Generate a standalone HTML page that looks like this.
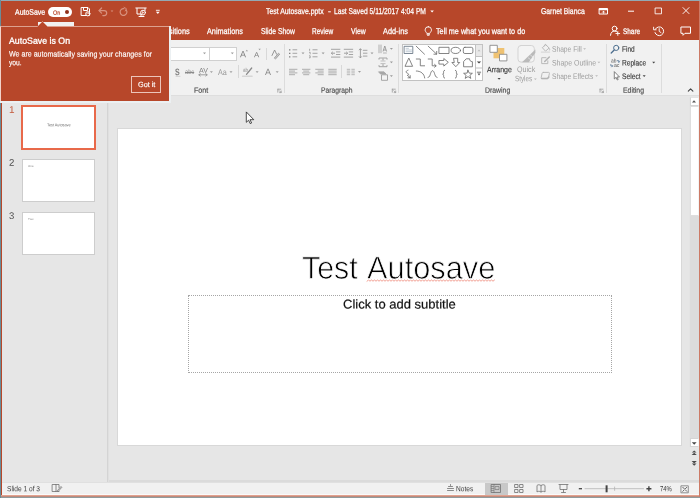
<!DOCTYPE html>
<html><head><meta charset="utf-8"><title>Test Autosave.pptx - PowerPoint</title>
<style>
html,body{margin:0;padding:0;}
body{width:700px;height:498px;position:relative;overflow:hidden;background:#e6e6e6;font-family:"Liberation Sans",sans-serif;}
.b{position:absolute;box-sizing:border-box;}
.t{position:absolute;white-space:nowrap;line-height:1;transform-origin:0 0;display:block;}
svg{position:absolute;left:0;top:0;}
</style></head><body>
<!-- window frame -->
<div class="b" style="left:0;top:0;width:700px;height:498px;background:#B7472A"></div>
<div class="b" style="left:0;top:0;width:700px;height:1px;background:#93a9b3"></div>
<div class="b" style="left:0;top:497px;width:700px;height:1px;background:#8f9c9e"></div>
<div class="b" style="left:0;top:0;width:1px;height:498px;background:#6a8c98"></div>
<div class="b" style="left:699px;top:1px;width:1px;height:496px;background:#cc7a66"></div>
<div class="b" style="left:1px;top:496px;width:698px;height:1px;background:#c08a7c"></div>
<!-- ribbon -->
<div class="b" style="left:2px;top:40px;width:697px;height:56px;background:#f1f1f1;border-bottom:1px solid #dedede"></div>
<!-- home tab -->
<div class="b" style="left:38px;top:22px;width:36px;height:18px;background:#f1f1f1"></div>
<!-- work area -->
<div class="b" style="left:2px;top:96px;width:697px;height:387px;background:#e6e6e6"></div>
<div class="b" style="left:107px;top:101px;width:1px;height:381px;background:#d4d4d4"></div>
<div class="b" style="left:108px;top:101px;width:1px;height:381px;background:#e0e0e0"></div>
<!-- thumbs -->
<div class="b" style="left:21px;top:105px;width:75px;height:45px;background:#fff;border:2px solid #E8694A"></div>
<div class="b" style="left:22px;top:159px;width:73px;height:43px;background:#fff;border:1px solid #cdcdcd"></div>
<div class="b" style="left:22px;top:212px;width:73px;height:43px;background:#fff;border:1px solid #cdcdcd"></div>
<!-- slide -->
<div class="b" style="left:117px;top:128px;width:565px;height:318px;background:#fff;border:1px solid #d8d8d8"></div>
<div class="b" style="left:188px;top:295px;width:424px;height:78px;border:1px dotted #a6a6a6"></div>
<!-- scrollbar -->
<div class="b" style="left:689px;top:97px;width:10px;height:350px;background:#dcdcdc;border-left:1px solid #e4e4e4"></div>
<div class="b" style="left:690px;top:97px;width:9px;height:9px;background:#fff;border:1px solid #d4d4d4;border-right-color:#f4f4f4;border-top-color:#e4e4e4"></div>
<div class="b" style="left:690px;top:106px;width:9px;height:110px;background:#fff;border:1px solid #dedede;border-right-color:#f4f4f4"></div>
<div class="b" style="left:690px;top:438px;width:9px;height:9px;background:#fff;border:1px solid #d4d4d4;border-right-color:#f4f4f4"></div>
<!-- status bar -->
<div class="b" style="left:109px;top:480px;width:590px;height:2px;background:#dbdbdb"></div>
<div class="b" style="left:2px;top:482px;width:697px;height:1px;background:#e0e0e0"></div>
<div class="b" style="left:2px;top:483px;width:697px;height:12px;background:#f1f1f1"></div>
<div class="b" style="left:2px;top:494px;width:697px;height:1px;background:#fafafa"></div>
<div class="b" style="left:1px;top:495px;width:698px;height:1px;background:#e2a28f"></div>
<div class="b" style="left:485px;top:483px;width:23px;height:12px;background:#c8c8c8"></div>
<!-- ribbon widgets -->
<div class="b" style="left:150px;top:47px;width:60px;height:14px;background:#fff;border:1px solid #d0d0d0"></div>
<div class="b" style="left:209px;top:47px;width:28px;height:14px;background:#fff;border:1px solid #d0d0d0"></div>
<div class="b" style="left:402px;top:44px;width:81px;height:37px;background:#fff;border:1px solid #c2c2c2"></div>
<div class="b" style="left:476px;top:45px;width:6px;height:12px;background:#e9e9e9"></div>
<!-- group separators -->
<div class="b" style="left:284px;top:44px;width:1px;height:49px;background:#dcdcdc"></div>
<div class="b" style="left:398px;top:44px;width:1px;height:49px;background:#dcdcdc"></div>
<div class="b" style="left:606px;top:44px;width:1px;height:49px;background:#dcdcdc"></div>
<div class="b" style="left:661px;top:44px;width:1px;height:49px;background:#dcdcdc"></div>
<div class="b" style="left:266px;top:48px;width:1px;height:12px;background:#d8d8d8"></div>
<div class="b" style="left:238px;top:65px;width:1px;height:13px;background:#d8d8d8"></div>
<div class="b" style="left:341px;top:65px;width:1px;height:13px;background:#d8d8d8"></div>
<!-- autosave toggle -->
<div class="b" style="left:48px;top:7px;width:24px;height:10px;background:#fff;border-radius:5px"></div>
<div class="b" style="left:65px;top:10px;width:4px;height:4px;background:#8f2f1a;border-radius:2px"></div>

<svg width="700" height="498" viewBox="0 0 700 498" fill="none" stroke-linecap="round" stroke-linejoin="round">
<!-- ===== title bar / QAT ===== -->
<g stroke="#fff" stroke-width="1">
 <!-- save -->
 <path d="M81.5 7.5h6.5l1.5 1.5v6.5h-8z"/>
 <path d="M83.5 7.5v3h4v-3" />
 <circle cx="87.8" cy="13.8" r="2.1" fill="#B7472A"/>
 <path d="M86.8 13.8a1 1 0 0 1 2 0" stroke-width="0.7"/>
 <!-- presentation -->
 <path d="M135.8 8h10.4"/>
 <path d="M137 8.5v5.5h3.5M145 8.5v2"/>
 <circle cx="143" cy="12.6" r="2.4"/>
 <path d="M142.4 11.6l1.5 1-1.5 1z" fill="#fff" stroke-width="0.4"/>
 <path d="M139 16.5h5M141 14.2v2"/>
 <!-- customize QAT -->
 <path d="M156.300 10.300h3" stroke-width="0.9"/>
 <path d="M155.900 11.800h3.800l-1.900 2.100z" fill="#fff" stroke="none"/>
 <!-- title dropdown -->
 <path d="M430.3 10.6h3.6l-1.8 2z" fill="#fff" stroke="none"/>
 <!-- ribbon display options -->
 <rect x="599.5" y="8.5" width="8" height="5.5"/>
 <path d="M599.5 9.5h8" stroke-width="1.4"/>
 <path d="M602.3 12.4l1.2-1.3 1.2 1.3M603.5 11.3v2" stroke-width="0.8"/>
 <!-- minimize -->
 <path d="M628 11.2h6" stroke-linecap="butt"/>
 <!-- maximize -->
 <rect x="655.500" y="8" width="6" height="5.800" stroke-width="0.85"/>
 <!-- close -->
 <path d="M683 7.6l6 6M689 7.6l-6 6" stroke-width="0.9"/>
 <!-- share person -->
 <circle cx="614.6" cy="28.6" r="2.4"/>
 <path d="M610.5 35.3c0.2-3 2-4.2 4.1-4.2c1.2 0 2.1 0.4 2.8 1"/>
 <path d="M617.8 31.6v3.8M615.9 33.5h3.8" stroke-width="0.9"/>
 <!-- history -->
 <path d="M655.3 29.2a4.4 4.4 0 1 1 -0.3 3.4"/>
 <path d="M653.6 27.2v2.6h2.6" stroke-width="0.9"/>
 <path d="M659.2 28.6v2.8l1.8 1.2" stroke-width="0.9"/>
 <!-- comment -->
 <path d="M681.300 27h9.200v6.300h-5.500l-2 2v-2h-1.700z"/>
 <!-- bulb -->
 <path d="M428.300 26.700a3.200 3.200 0 0 1 3.200 3.200c0 1.400-1.100 2.100-1.700 3.500h-3c-0.600-1.400-1.700-2.100-1.700-3.500a3.200 3.200 0 0 1 3.200-3.200z" stroke-width="0.9"/>
 <path d="M427 34.400h2.600M427.500 35.400h1.600" stroke-width="0.8"/>
</g>
<!-- faded undo / redo -->
<g stroke="#d8927f" stroke-width="1.2">
 <path d="M101.600 8l-2.600 2.600 2.600 2.600"/>
 <path d="M99.200 10.600h5a2.500 2.500 0 0 1 0 5h-1.400"/>
 <path d="M110.600 10.400h2.800l-1.400 1.600z" fill="#d8927f" stroke="none"/>
 <path d="M126.300 10a3.400 3.400 0 1 1 -2.400 -1.400"/>
 <path d="M124 7.300l2.400 1.400-1.200 2.300" stroke-width="0.9"/>
</g>

<!-- ===== Font group ===== -->
<g fill="#9c9c9c" stroke="none">
 <path d="M203 52.600h3l-1.500 1.700z"/>
 <path d="M230.800 52.600h3l-1.500 1.700z"/>
 <path d="M245.600 51.200h2.400l-1.200-1.500z"/>
 <path d="M258.400 48.800h2.400l-1.200 1.500z"/>
</g>
<g fill="#a0a0a0" stroke="none">
 <path d="M209.900 71.300h3l-1.500 1.700z"/>
 <path d="M229.500 71.300h3l-1.500 1.700z"/>
 <path d="M255.600 71.300h3l-1.500 1.700z"/>
 <path d="M275.700 71.300h3l-1.500 1.700z"/>
</g>
<g stroke="#8a8a8a" stroke-width="0.9">
 <!-- AV arrows -->
 <path d="M199 74.800h8M200.300 73.600l-1.500 1.200 1.500 1.200M205.700 73.600l1.500 1.200-1.500 1.200" stroke-width="0.8"/>
 <!-- clear formatting -->
 <path d="M272 55.500l2.600-5.500 2 4.200" />
 <path d="M274.500 57.800l4-4.600 1.200 1-4 4.600z" fill="#c8c8c8" stroke-width="0.7"/>
 <!-- highlighter pen -->
 <path d="M246.500 74.300l5.200-6.300" stroke-width="1.300"/>
 <path d="M242.600 76.300h9.400" stroke="#d6d6d6" stroke-width="1.600"/>
 <!-- font color bar -->
 <!-- S shadow -->
 <path d="M176 76.300h4" stroke="#cfcfcf" stroke-width="1"/>
</g>
<!-- dialog launchers -->
<g stroke="#9a9a9a" stroke-width="0.8">
 <path d="M278 89.200h-0.200v3M277.800 89.200h3"/>
 <path d="M279.300 90.700l1.700 1.700M281.200 91v1.600h-1.600"/>
 <path d="M392.300 89.200v3M392.300 89.200h3"/>
 <path d="M393.800 90.700l1.700 1.700M395.700 91v1.600h-1.600"/>
 <path d="M600 89.200v3M600 89.200h3"/>
 <path d="M601.500 90.700l1.700 1.700M603.400 91v1.600h-1.600"/>
</g>

<!-- ===== Paragraph group ===== -->
<g stroke="#9c9c9c" stroke-width="0.9" stroke-linecap="butt">
 <!-- bullets -->
 <path d="M292.500 49.800h4.700M292.500 53.300h4.700M292.500 56.800h4.700"/>
 <path d="M289 49.800h1.400M289 53.300h1.400M289 56.800h1.400" stroke="#808080" stroke-width="1.300"/>
 <!-- numbering -->
 <path d="M312.500 49.800h5M312.500 53.300h5M312.500 56.800h5"/>
 <path d="M309.600 48.800v2M309 52.300h1.200v2M309 55.800h1.200v2h-1.200" stroke="#8c8c8c" stroke-width="0.7"/>
 <!-- decrease indent -->
 <path d="M331 49.300h9.300M336 51.900h4.300M336 54.500h4.300M331 57.100h9.300"/>
 <path d="M335 53.200h-3.600M332.800 51.800l-1.500 1.400 1.500 1.400" stroke="#8c8c8c" stroke-width="0.8"/>
 <!-- increase indent -->
 <path d="M343.800 49.300h9.300M348.800 51.900h4.300M348.800 54.500h4.300M343.800 57.100h9.300"/>
 <path d="M344 53.200h3.600M346.200 51.800l1.500 1.400-1.500 1.400" stroke="#8c8c8c" stroke-width="0.8"/>
 <!-- line spacing -->
 <path d="M363 50.300h4.400M363 53.200h4.400M363 56.100h4.400"/>
 <path d="M360.400 48.800v9M359 50.200l1.400-1.500 1.400 1.500M359 56.400l1.400 1.500 1.400-1.500" stroke="#8c8c8c" stroke-width="0.8"/>
 <!-- text direction -->
 <path d="M379 44.600v8.600M381 44.600v8.600" stroke="#a8a8a8"/>
 <path d="M383 51.500l1.800-5.500 1.800 5.500M383.600 50h2.400" stroke="#8c8c8c" stroke-width="0.8"/>
 <path d="M383 53h3.800" stroke-width="0.7"/>
 <!-- align text -->
 <path d="M379 58h8M379 66.700h8M379 58v1.600M387 58v1.600M379 66.700v-1.600M387 66.700v-1.600"/>
 <path d="M380.500 61h5M380.500 63.600h5" stroke="#aaa" stroke-width="0.7"/>
 <path d="M383 58.500v1.800M383 66v-1.800" stroke="#8c8c8c" stroke-width="0.8"/>
 <!-- smartart -->
 <path d="M378.500 71.800h5.500l2 2.300h-5.500z" fill="#ababab" stroke-width="0.6"/>
 <rect x="381.500" y="74.800" width="6" height="5.500" fill="#f4f4f4"/>
 <!-- align row -->
 <path d="M289 69.300h8.400M289 71.100h6M289 72.900h8.400M289 74.700h6" stroke="#a6a6a6"/>
 <path d="M302 69.300h8.400M303.200 71.100h6M302 72.900h8.400M303.200 74.700h6" stroke="#a6a6a6"/>
 <path d="M315.300 69.300h8.400M317.700 71.100h6M315.300 72.900h8.400M317.700 74.700h6" stroke="#a6a6a6"/>
 <path d="M328.300 69.300h8.400M328.300 71.100h8.400M328.300 72.900h8.400M328.300 74.700h8.400" stroke="#a6a6a6"/>
 <!-- columns -->
 <path d="M346.800 69.300h3.400M346.800 71.100h3.400M346.800 72.900h3.400M346.800 74.700h3.400M351.400 69.300h3.400M351.400 71.100h3.400M351.400 72.900h3.400M351.400 74.700h3.400" stroke="#b0b0b0"/>
</g>
<g fill="#9a9a9a" stroke="none">
 <path d="M301.500 52.600h3l-1.500 1.700z"/>
 <path d="M321.600 52.600h3l-1.500 1.700z"/>
 <path d="M370.500 52.600h3l-1.500 1.700z"/>
 <path d="M389.900 48.100h3l-1.500 1.700z"/>
 <path d="M389.900 61.600h3l-1.500 1.700z"/>
 <path d="M389.900 75.200h3l-1.500 1.700z"/>
 <path d="M358 71h3l-1.500 1.700z"/>
</g>

<!-- ===== Drawing group ===== -->
<g stroke="#666" stroke-width="0.8">
 <!-- row1 -->
 <rect x="404.500" y="46.300" width="8.300" height="7.200" stroke="#5a6a7a"/>
 <path d="M406 48.300h2.500M406 50h5.500M406 51.700h5.500" stroke="#9ab" stroke-width="0.6"/>
 <path d="M416.200 46.200l8.300 8"/>
 <path d="M428.200 46.200l8.500 8M436.700 51.400v2.800h-2.800"/>
 <rect x="439.300" y="47.300" width="9.700" height="6.200"/>
 <ellipse cx="455.800" cy="50.400" rx="4.700" ry="3.100"/>
 <rect x="463.300" y="47.300" width="9.600" height="6.200" rx="1.600"/>
 <!-- row2 -->
 <path d="M409 58.400l3.600 7.900h-7.200z"/>
 <path d="M416.300 59h4v6.800h4.300"/>
 <path d="M428.200 59h4v6.800h3.600M434.600 64.400l1.600 1.400-1.600 1.400"/>
 <path d="M439.300 60.500h4.500v-2l4.500 3.800-4.500 3.800v-2h-4.500z"/>
 <path d="M453.900 58.300h3.800v4.200h2l-3.900 4.200-3.900-4.200h2z"/>
 <path d="M463.6 66.4v-4.800l2.600-2.800h3.400c-0.100 1.600 0.700 2.700 2.800 2.900v4.700z"/>
 <!-- row3 -->
 <path d="M408 70.200c-2 0.600-2.600 2-1 2.800s2.600 1.200 0.600 2.400M407.600 75.400l2.600 2.400M410.200 75.600v2.200h-2.200"/>
 <path d="M416.300 71c4.400 0 8 2.600 8.400 7"/>
 <path d="M428 77.5c1.7-0.2 2-2.3 2.6-4.1s1.1-2.7 1.9-2.7s1.4 0.9 2 2.700s1 3.900 2.600 4.100"/>
 <path d="M444.600 70.300c-1.400 0.200-1 1.600-1 2.600s-0.400 1.200-1 1.300c0.600 0.100 1 0.300 1 1.300s-0.400 2.400 1 2.600"/>
 <path d="M455.400 70.300c1.400 0.200 1 1.600 1 2.600s0.400 1.200 1 1.300c-0.600 0.100-1 0.300-1 1.300s0.400 2.400-1 2.600"/>
 <path d="M468 70.200l1.200 2.900 3.200 0.200-2.500 2 0.900 3.100-2.800-1.800-2.800 1.800 0.900-3.100-2.500-2 3.200-0.200z"/>
</g>
<!-- gallery scroll buttons -->
<g stroke="#c2c2c2" stroke-width="1" stroke-linecap="butt">
 <path d="M475.500 45v35.500M475.500 56.500h7M475.500 68h7"/>
</g>
<path d="M477.500 51.300h3l-1.500-1.700z" fill="#bdbdbd"/>
<path d="M476.800 61.500h4.400l-2.200 2.100z" fill="#444"/>
<path d="M477.500 73.600h3l-1.500 1.800z" fill="#555"/>
<path d="M477.300 72.200h3.400" stroke="#555" stroke-width="0.8"/>
<!-- arrange -->
<rect x="493.500" y="48" width="10.800" height="10.300" fill="#efc272"/>
<rect x="490.300" y="45.300" width="7" height="7" fill="#fff" stroke="#8a8a8a" stroke-width="0.9"/>
<rect x="499.900" y="54.300" width="7" height="6.600" fill="#fff" stroke="#8a8a8a" stroke-width="0.9"/>
<path d="M497.500 78h3.200l-1.600 1.800z" fill="#444"/>
<!-- quick styles -->
<rect x="518" y="45.500" width="16.300" height="16.600" rx="3" stroke="#d3d3d3" stroke-width="1" fill="#f4f4f4"/>
<path d="M535.400 49.400L535.400 52.800L528.800 62.200L522 62.200Z" fill="#bababa"/>
<path d="M530.600 55.200l2.200 1.600M528.400 58l2.200 1.600" stroke="#e4e4e4" stroke-width="0.800"/>
<path d="M534 78.400h2.800l-1.400 1.600z" fill="#b8b8b8"/>
<!-- shape fill/outline/effects icons -->
<g stroke="#b4b4b4" stroke-width="0.9">
 <path d="M542.600 47.400l3.200-2.800 3.300 3.500-3.300 2.800z"/>
 <path d="M544.400 45.800c-0.400-1.800 2.200-2 2-0.200"/>
 <path d="M549.300 48.400c0.600 0.800 0.600 1.600 0 2" stroke-width="0.8"/>
 <path d="M541.400 52.100h8.200" stroke="#d9d9d9" stroke-width="1.300"/>
 <path d="M546 57.700h-4.300v5.900h6.100v-2.800"/>
 <path d="M544.700 61.500l4.600-4.500" stroke-width="1.500"/>
 <path d="M543.300 72.400h5.300q1 0 0.800 1l-0.900 4.200q-0.200 1-1.200 1h-5.300q-1 0-0.800-1l0.900-4.200q0.200-1 1.200-1z"/>
 <path d="M541.600 78.500h5.800l1.400-1.400" stroke-width="1.500"/>
</g>
<g fill="#b8b8b8">
 <path d="M583.200 48.200h2.800l-1.400 1.600z"/>
 <path d="M597.500 61.700h2.800l-1.400 1.600z"/>
 <path d="M595.200 75.200h2.800l-1.400 1.600z"/>
</g>
<!-- ===== Editing ===== -->
<g stroke="#4e6f8f" stroke-width="1">
 <circle cx="616.200" cy="47.900" r="2.600"/>
 <path d="M614.200 50l-3 3" stroke-width="1.300"/>
</g>
<g stroke="#666" stroke-width="0.8">
 <path d="M614.300 72v7l1.700-1.600 1.300 2.600 0.900-0.500-1.300-2.500h2.200z" fill="#fff"/>
</g>
<g stroke="#5a7a9a" stroke-width="0.7"><path d="M617.300 60.600h1.600v1.600M610.800 64.400v1.600h1.800M618.900 62.200l-1-1M618.900 62.200l1-1M612.600 66l-0.900-0.900M612.600 66l-0.900 0.900"/></g>
<path d="M652.200 61.700h3l-1.500 1.700z" fill="#444"/>
<path d="M642.700 75.200h3l-1.500 1.700z" fill="#444"/>
<!-- collapse ribbon -->
<path d="M688.300 91.200l2.300-2.400 2.300 2.400" stroke="#444" stroke-width="1.100"/>

<!-- ===== scrollbar arrows ===== -->
<path d="M692 102.400h4l-2-2.200z" fill="#555"/>
<path d="M691.800 442.200h4.800l-2.400 2.600z" fill="#444"/>
<g fill="#4a4a4a" stroke="none">
 <path d="M694.200 450.400l2.300 2.200h-4.600z"/><path d="M694.200 452.700l2.600 2.400h-5.200z"/>
 <path d="M694.200 465.800l2.300-2.200h-4.600z"/><path d="M694.200 463.400l2.600-2.400h-5.200z"/>
</g>

<!-- ===== status bar ===== -->
<g stroke="#707070" stroke-width="0.8">
 <!-- spellcheck book -->
 <path d="M52.500 484.500h3.500v7h-3.500zM56 484.500h3v3M56 491.500h3"/>
 <path d="M57.500 490.500l3.500-4 0.800 0.800-3.500 4z" />
 <!-- notes -->
 <path d="M447.500 488.500h6M447.500 490.500h6M448.500 486.500h4M450.500 484.500v1" />
 <!-- normal view -->
 <rect x="491.500" y="484.500" width="9" height="8" />
 <path d="M494 484.500v8M491.500 486.500h2M491.500 488.500h2M491.500 490.500h2" stroke-width="0.6"/>
 <rect x="495.500" y="486.500" width="3.500" height="3" stroke-width="0.6"/>
 <!-- sorter -->
 <rect x="515" y="484.500" width="3" height="3"/><rect x="520" y="484.500" width="3" height="3"/>
 <rect x="515" y="489.500" width="3" height="3"/><rect x="520" y="489.500" width="3" height="3"/>
 <!-- reading -->
 <path d="M541 485.500c-1.500-1-3-1-4 0v6.500c1-1 2.500-1 4 0c1.500-1 3-1 4 0v-6.500c-1-1-2.500-1-4 0v6.500"/>
 <!-- slideshow -->
 <path d="M559 484.500h9M560 485v4.500h7v-4.500M563.500 489.500v2.500M561.500 492.500h4"/>
 <!-- zoom -->
 <path d="M578.800 488.700h3.200" stroke="#444" stroke-width="1.300" stroke-linecap="butt"/>
 <path d="M585 488.700h58.500" stroke="#b2b2b2" stroke-width="0.800"/>
 <path d="M614.600 487v3.400" stroke="#b2b2b2" stroke-width="0.800"/>
 <path d="M606.600 485.300v7" stroke="#444" stroke-width="2" stroke-linecap="butt"/>
 <path d="M646.400 488.800h5M648.900 486.300v5" stroke="#444" stroke-width="1.400" stroke-linecap="butt"/>
 <!-- fit -->
 <rect x="681.300" y="485.800" width="7" height="7" stroke="#777"/>
 <path d="M682.800 487.300l1.400 1.400M686.800 487.300l-1.400 1.400M682.800 491.300l1.400-1.400M686.800 491.300l-1.400-1.400" stroke="#555" stroke-width="0.900"/>
</g>

<!-- ===== squiggle ===== -->
<path d="M367 281.2 l1.5 -1.2 l1.5 1.2 l1.5 -1.2 l1.5 1.2 l1.5 -1.2 l1.5 1.2 l1.5 -1.2 l1.5 1.2 l1.5 -1.2 l1.5 1.2 l1.5 -1.2 l1.5 1.2 l1.5 -1.2 l1.5 1.2 l1.5 -1.2 l1.5 1.2 l1.5 -1.2 l1.5 1.2 l1.5 -1.2 l1.5 1.2 l1.5 -1.2 l1.5 1.2 l1.5 -1.2 l1.5 1.2 l1.5 -1.2 l1.5 1.2 l1.5 -1.2 l1.5 1.2 l1.5 -1.2 l1.5 1.2 l1.5 -1.2 l1.5 1.2 l1.5 -1.2 l1.5 1.2 l1.5 -1.2 l1.5 1.2 l1.5 -1.2 l1.5 1.2 l1.5 -1.2 l1.5 1.2 l1.5 -1.2 l1.5 1.2 l1.5 -1.2 l1.5 1.2 l1.5 -1.2 l1.5 1.2 l1.5 -1.2 l1.5 1.2 l1.5 -1.2 l1.5 1.2 l1.5 -1.2 l1.5 1.2 l1.5 -1.2 l1.5 1.2 l1.5 -1.2 l1.5 1.2 l1.5 -1.2 l1.5 1.2 l1.5 -1.2 l1.5 1.2 l1.5 -1.2 l1.5 1.2 l1.5 -1.2 l1.5 1.2 l1.5 -1.2 l1.5 1.2 l1.5 -1.2 l1.5 1.2 l1.5 -1.2 l1.5 1.2 l1.5 -1.2 l1.5 1.2 l1.5 -1.2 l1.5 1.2 l1.5 -1.2 l1.5 1.2 l1.5 -1.2 l1.5 1.2 l1.5 -1.2 l1.5 1.2 l1.5 -1.2 l1.5 1.2 l1.5 -1.2 l1.5 1.2 l1.5 -1.2" stroke="#e8604a" stroke-width="0.6" stroke-linejoin="miter"/>
<!-- ===== mouse cursor ===== -->
<path d="M246.300 112.300L246.300 122.300L248.600 120.200L250.200 123.600L251.600 123L250 119.700L253.400 119.700Z" fill="#fff" stroke="#222" stroke-width="0.8" stroke-linejoin="miter"/>

</svg>
<div class="b" style="left:0;top:0;width:700px;height:498px;will-change:transform">
<span class="t" style="left:14.8px;top:8px;font-size:8px;color:#ffffff;font-weight:400;font-family:'Liberation Sans', sans-serif;transform:translateY(0.70px) rotate(0.05deg) scaleX(0.8701);-webkit-text-stroke:0.25px #fff;">AutoSave</span>
<span class="t" style="left:52.7px;top:9px;font-size:6px;color:#B7472A;font-weight:400;font-family:'Liberation Sans', sans-serif;transform:translateY(0.70px) rotate(0.05deg) scaleX(0.9101);-webkit-text-stroke:0.2px #B7472A;">On</span>
<span class="t" style="left:266.3px;top:6px;font-size:8.5px;color:#ffffff;font-weight:400;font-family:'Liberation Sans', sans-serif;transform:translateY(0.90px) rotate(0.05deg) scaleX(0.8085);-webkit-text-stroke:0.25px #fff;">Test Autosave.pptx</span>
<span class="t" style="left:328px;top:6px;font-size:8.5px;color:#ffffff;font-weight:400;font-family:'Liberation Sans', sans-serif;transform:translateY(0.90px) rotate(0.05deg) scaleX(1.0522);-webkit-text-stroke:0.25px #fff;">-</span>
<span class="t" style="left:334px;top:6px;font-size:8.5px;color:#ffffff;font-weight:400;font-family:'Liberation Sans', sans-serif;transform:translateY(0.90px) rotate(0.05deg) scaleX(0.7924);-webkit-text-stroke:0.25px #fff;">Last Saved 5/11/2017 4:04 PM</span>
<span class="t" style="left:540.6px;top:6px;font-size:8.5px;color:#ffffff;font-weight:400;font-family:'Liberation Sans', sans-serif;transform:translateY(0.90px) rotate(0.05deg) scaleX(0.8040);-webkit-text-stroke:0.25px #fff;">Garnet Bianca</span>
<span class="t" style="left:10px;top:26px;font-size:8.5px;color:#ffffff;font-weight:400;font-family:'Liberation Sans', sans-serif;transform:translateY(0.90px) rotate(0.05deg) scaleX(0.8752);-webkit-text-stroke:0.25px #fff;">File</span>
<span class="t" style="left:46px;top:27px;font-size:8px;color:#B7472A;font-weight:400;font-family:'Liberation Sans', sans-serif;transform:translateY(0.60px) rotate(0.05deg) scaleX(0.8431);">Home</span>
<span class="t" style="left:82px;top:26px;font-size:8.5px;color:#ffffff;font-weight:400;font-family:'Liberation Sans', sans-serif;transform:translateY(0.90px) rotate(0.05deg) scaleX(0.8461);-webkit-text-stroke:0.25px #fff;">Insert</span>
<span class="t" style="left:116px;top:26px;font-size:8.5px;color:#ffffff;font-weight:400;font-family:'Liberation Sans', sans-serif;transform:translateY(0.90px) rotate(0.05deg) scaleX(0.7932);-webkit-text-stroke:0.25px #fff;">Design</span>
<span class="t" style="left:153.5px;top:26px;font-size:8.5px;color:#ffffff;font-weight:400;font-family:'Liberation Sans', sans-serif;transform:translateY(0.90px) rotate(0.05deg) scaleX(0.8650);-webkit-text-stroke:0.25px #fff;">Transitions</span>
<span class="t" style="left:207px;top:26px;font-size:8.5px;color:#ffffff;font-weight:400;font-family:'Liberation Sans', sans-serif;transform:translateY(0.90px) rotate(0.05deg) scaleX(0.8557);-webkit-text-stroke:0.25px #fff;">Animations</span>
<span class="t" style="left:260.5px;top:26px;font-size:8.5px;color:#ffffff;font-weight:400;font-family:'Liberation Sans', sans-serif;transform:translateY(0.90px) rotate(0.05deg) scaleX(0.7946);-webkit-text-stroke:0.25px #fff;">Slide Show</span>
<span class="t" style="left:311.8px;top:26px;font-size:8.5px;color:#ffffff;font-weight:400;font-family:'Liberation Sans', sans-serif;transform:translateY(0.90px) rotate(0.05deg) scaleX(0.7603);-webkit-text-stroke:0.25px #fff;">Review</span>
<span class="t" style="left:351px;top:26px;font-size:8.5px;color:#ffffff;font-weight:400;font-family:'Liberation Sans', sans-serif;transform:translateY(0.90px) rotate(0.05deg) scaleX(0.8038);-webkit-text-stroke:0.25px #fff;">View</span>
<span class="t" style="left:383.2px;top:26px;font-size:8.5px;color:#ffffff;font-weight:400;font-family:'Liberation Sans', sans-serif;transform:translateY(0.90px) rotate(0.05deg) scaleX(0.8635);-webkit-text-stroke:0.25px #fff;">Add-ins</span>
<span class="t" style="left:435.6px;top:26px;font-size:8.5px;color:#ffffff;font-weight:400;font-family:'Liberation Sans', sans-serif;transform:translateY(0.90px) rotate(0.05deg) scaleX(0.8504);-webkit-text-stroke:0.25px #fff;">Tell me what you want to do</span>
<span class="t" style="left:623.4px;top:27px;font-size:8px;color:#ffffff;font-weight:400;font-family:'Liberation Sans', sans-serif;transform:translateY(0.90px) rotate(0.05deg) scaleX(0.8003);-webkit-text-stroke:0.25px #fff;">Share</span>
<span class="t" style="left:194px;top:86px;font-size:7.7px;color:#4a4a4a;font-weight:400;font-family:'Liberation Sans', sans-serif;transform:translateY(0.70px) rotate(0.05deg) scaleX(0.9287);-webkit-text-stroke:0.15px #4a4a4a;">Font</span>
<span class="t" style="left:320.7px;top:86px;font-size:7.7px;color:#4a4a4a;font-weight:400;font-family:'Liberation Sans', sans-serif;transform:translateY(0.70px) rotate(0.05deg) scaleX(0.8771);-webkit-text-stroke:0.15px #4a4a4a;">Paragraph</span>
<span class="t" style="left:485px;top:86px;font-size:7.7px;color:#4a4a4a;font-weight:400;font-family:'Liberation Sans', sans-serif;transform:translateY(0.70px) rotate(0.05deg) scaleX(0.8969);-webkit-text-stroke:0.15px #4a4a4a;">Drawing</span>
<span class="t" style="left:623px;top:86px;font-size:7.7px;color:#4a4a4a;font-weight:400;font-family:'Liberation Sans', sans-serif;transform:translateY(0.70px) rotate(0.05deg) scaleX(0.8928);-webkit-text-stroke:0.15px #4a4a4a;">Editing</span>
<span class="t" style="left:486.6px;top:66px;font-size:8px;color:#3a3a3a;font-weight:400;font-family:'Liberation Sans', sans-serif;transform:translateY(0.20px) rotate(0.05deg) scaleX(0.8744);-webkit-text-stroke:0.15px #3a3a3a;">Arrange</span>
<span class="t" style="left:517px;top:65px;font-size:8px;color:#9e9e9e;font-weight:400;font-family:'Liberation Sans', sans-serif;transform:translateY(0.90px) rotate(0.05deg) scaleX(0.8895);">Quick</span>
<span class="t" style="left:515px;top:75px;font-size:8px;color:#9e9e9e;font-weight:400;font-family:'Liberation Sans', sans-serif;transform:translateY(0.20px) rotate(0.05deg) scaleX(0.7889);">Styles</span>
<span class="t" style="left:552px;top:45px;font-size:8px;color:#9e9e9e;font-weight:400;font-family:'Liberation Sans', sans-serif;transform:translateY(0.70px) rotate(0.05deg) scaleX(0.8346);">Shape Fill</span>
<span class="t" style="left:552px;top:59px;font-size:8px;color:#9e9e9e;font-weight:400;font-family:'Liberation Sans', sans-serif;transform:translateY(0.40px) rotate(0.05deg) scaleX(0.8677);">Shape Outline</span>
<span class="t" style="left:552px;top:72px;font-size:8px;color:#9e9e9e;font-weight:400;font-family:'Liberation Sans', sans-serif;transform:translateY(0.90px) rotate(0.05deg) scaleX(0.8313);">Shape Effects</span>
<span class="t" style="left:622.3px;top:45px;font-size:8px;color:#3a3a3a;font-weight:400;font-family:'Liberation Sans', sans-serif;transform:translateY(0.70px) rotate(0.05deg) scaleX(0.8157);-webkit-text-stroke:0.15px #3a3a3a;">Find</span>
<span class="t" style="left:622.3px;top:59px;font-size:8px;color:#3a3a3a;font-weight:400;font-family:'Liberation Sans', sans-serif;transform:translateY(0.40px) rotate(0.05deg) scaleX(0.8241);-webkit-text-stroke:0.15px #3a3a3a;">Replace</span>
<span class="t" style="left:622.3px;top:72px;font-size:8px;color:#3a3a3a;font-weight:400;font-family:'Liberation Sans', sans-serif;transform:translateY(0.90px) rotate(0.05deg) scaleX(0.8408);-webkit-text-stroke:0.15px #3a3a3a;">Select</span>
<span class="t" style="left:240.2px;top:50px;font-size:9px;color:#808080;font-weight:400;font-family:'Liberation Sans', sans-serif;transform:translateY(0.30px) rotate(0.05deg) scaleX(0.9961);">A</span>
<span class="t" style="left:253.8px;top:51px;font-size:7.2px;color:#808080;font-weight:400;font-family:'Liberation Sans', sans-serif;transform:translateY(0.30px) rotate(0.05deg) scaleX(1.0826);">A</span>
<span class="t" style="left:174.5px;top:67px;font-size:9.5px;color:#808080;font-weight:700;font-family:'Liberation Sans', sans-serif;transform:translateY(0.20px) rotate(0.05deg) scaleX(0.7399);">S</span>
<span class="t" style="left:184.8px;top:68px;font-size:6.5px;color:#8a8a8a;font-weight:400;font-family:'Liberation Sans', sans-serif;transform:translateY(0.90px) rotate(0.05deg) scaleX(0.8770);text-decoration:line-through;">abc</span>
<span class="t" style="left:198.5px;top:67px;font-size:6.8px;color:#808080;font-weight:400;font-family:'Liberation Sans', sans-serif;transform:translateY(0.70px) rotate(0.05deg) scaleX(1.0387);">AV</span>
<span class="t" style="left:218px;top:67px;font-size:8.4px;color:#999;font-weight:400;font-family:'Liberation Sans', sans-serif;transform:translateY(0.90px) rotate(0.05deg) scaleX(0.8579);">Aa</span>
<span class="t" style="left:242.6px;top:67px;font-size:5.5px;color:#8a8a8a;font-weight:400;font-family:'Liberation Sans', sans-serif;transform:translateY(0.80px) rotate(0.05deg) scaleX(0.8157);">ab</span>
<span class="t" style="left:264.9px;top:67px;font-size:9px;color:#8a8a8a;font-weight:400;font-family:'Liberation Sans', sans-serif;transform:translateY(0.90px) rotate(0.05deg) scaleX(0.9961);">A</span>
<span class="t" style="left:610.6px;top:58px;font-size:5.5px;color:#555;font-weight:400;font-family:'Liberation Sans', sans-serif;transform:translateY(0.60px) rotate(0.05deg) scaleX(0.8809);">ab</span>
<span class="t" style="left:613.6px;top:63px;font-size:5.5px;color:#555;font-weight:400;font-family:'Liberation Sans', sans-serif;transform:translateY(0.00px) rotate(0.05deg) scaleX(0.9283);">ac</span>
<span class="t" style="left:302px;top:251px;font-size:32px;color:#000;font-weight:400;font-family:'Liberation Sans', sans-serif;transform:translateY(0.70px) rotate(0.05deg) scaleX(0.9469);-webkit-text-stroke:0.8px #fff;">Test</span>
<span class="t" style="left:366.6px;top:251px;font-size:32px;color:#000;font-weight:400;font-family:'Liberation Sans', sans-serif;transform:translateY(0.70px) rotate(0.05deg) scaleX(0.9622);-webkit-text-stroke:0.8px #fff;">Autosave</span>
<span class="t" style="left:343px;top:298px;font-size:12.8px;color:#111;font-weight:400;font-family:'Liberation Sans', sans-serif;transform:translateY(0.40px) rotate(0.05deg) scaleX(1.0164);-webkit-text-stroke:0.2px #111;">Click to add subtitle</span>
<span class="t" style="left:46.6px;top:123px;font-size:4px;color:#666;font-weight:400;font-family:'Liberation Sans', sans-serif;transform:translateY(0.30px) rotate(0.05deg) scaleX(0.9474);">Test Autosave</span>
<span class="t" style="left:28px;top:165px;font-size:3px;color:#888;font-weight:400;font-family:'Liberation Sans', sans-serif;transform:translateY(0.00px) rotate(0.05deg) scaleX(0.9693);">One</span>
<span class="t" style="left:28px;top:218px;font-size:3px;color:#888;font-weight:400;font-family:'Liberation Sans', sans-serif;transform:translateY(0.00px) rotate(0.05deg) scaleX(0.9967);">Two</span>
<span class="t" style="left:8.6px;top:105px;font-size:10px;color:#C45A3C;font-weight:400;font-family:'Liberation Sans', sans-serif;transform:translateY(0.00px) rotate(0.05deg) scaleX(1.0000);">1</span>
<span class="t" style="left:8.6px;top:157px;font-size:9.5px;color:#4a4a4a;font-weight:400;font-family:'Liberation Sans', sans-serif;transform:translateY(0.80px) rotate(0.05deg) scaleX(1.0000);">2</span>
<span class="t" style="left:8.6px;top:211px;font-size:9.5px;color:#4a4a4a;font-weight:400;font-family:'Liberation Sans', sans-serif;transform:translateY(0.00px) rotate(0.05deg) scaleX(1.0000);">3</span>
<span class="t" style="left:7px;top:485px;font-size:7.5px;color:#3c3c3c;font-weight:400;font-family:'Liberation Sans', sans-serif;transform:translateY(0.30px) rotate(0.05deg) scaleX(0.8791);">Slide 1 of 3</span>
<span class="t" style="left:456.4px;top:485px;font-size:7.5px;color:#3c3c3c;font-weight:400;font-family:'Liberation Sans', sans-serif;transform:translateY(0.30px) rotate(0.05deg) scaleX(0.8775);">Notes</span>
<span class="t" style="left:660.4px;top:485px;font-size:7.5px;color:#3c3c3c;font-weight:400;font-family:'Liberation Sans', sans-serif;transform:translateY(0.30px) rotate(0.05deg) scaleX(0.7855);">74%</span>
</div>
<!-- popup -->
<div class="b" style="left:0;top:26px;width:171px;height:77px;background:#ecf0f2"></div>
<div class="b" style="left:0;top:26px;width:169px;height:75px;background:#B7472A;border-top:1px solid #dca18f;border-left:1px solid #f2d3cb"></div>
<div class="b" style="left:131px;top:76px;width:30px;height:17px;border:1px solid #ecc5ba"></div>
<svg width="700" height="498" viewBox="0 0 700 498" fill="none">
<path d="M37.5 26.500 L42.500 21.500 L47.500 26.500 L47.5 27 L37.5 27 Z" fill="#B7472A" stroke="none"/>
<path d="M37.500 26.500 L42.500 21.500 L47.500 26.500" stroke="#dca18f" stroke-width="1"/>
</svg>
<div class="b" style="left:0;top:0;width:700px;height:498px;will-change:transform">
<span class="t" style="left:9.3px;top:36px;font-size:9px;color:#ffffff;font-weight:400;font-family:'Liberation Sans', sans-serif;transform:translateY(0.70px) rotate(0.05deg) scaleX(0.9767);-webkit-text-stroke:0.3px #fff;">AutoSave is On</span>
<span class="t" style="left:9.3px;top:50px;font-size:8px;color:#ffffff;font-weight:400;font-family:'Liberation Sans', sans-serif;transform:translateY(0.60px) rotate(0.05deg) scaleX(0.8842);-webkit-text-stroke:0.15px #fff;">We are automatically saving your changes for</span>
<span class="t" style="left:9.3px;top:59px;font-size:8px;color:#ffffff;font-weight:400;font-family:'Liberation Sans', sans-serif;transform:translateY(0.30px) rotate(0.05deg) scaleX(0.8393);-webkit-text-stroke:0.15px #fff;">you.</span>
<span class="t" style="left:137.6px;top:81px;font-size:7.5px;color:#ffffff;font-weight:400;font-family:'Liberation Sans', sans-serif;transform:translateY(0.10px) rotate(0.05deg) scaleX(0.9697);-webkit-text-stroke:0.15px #fff;">Got it</span>
</div>
</body></html>
